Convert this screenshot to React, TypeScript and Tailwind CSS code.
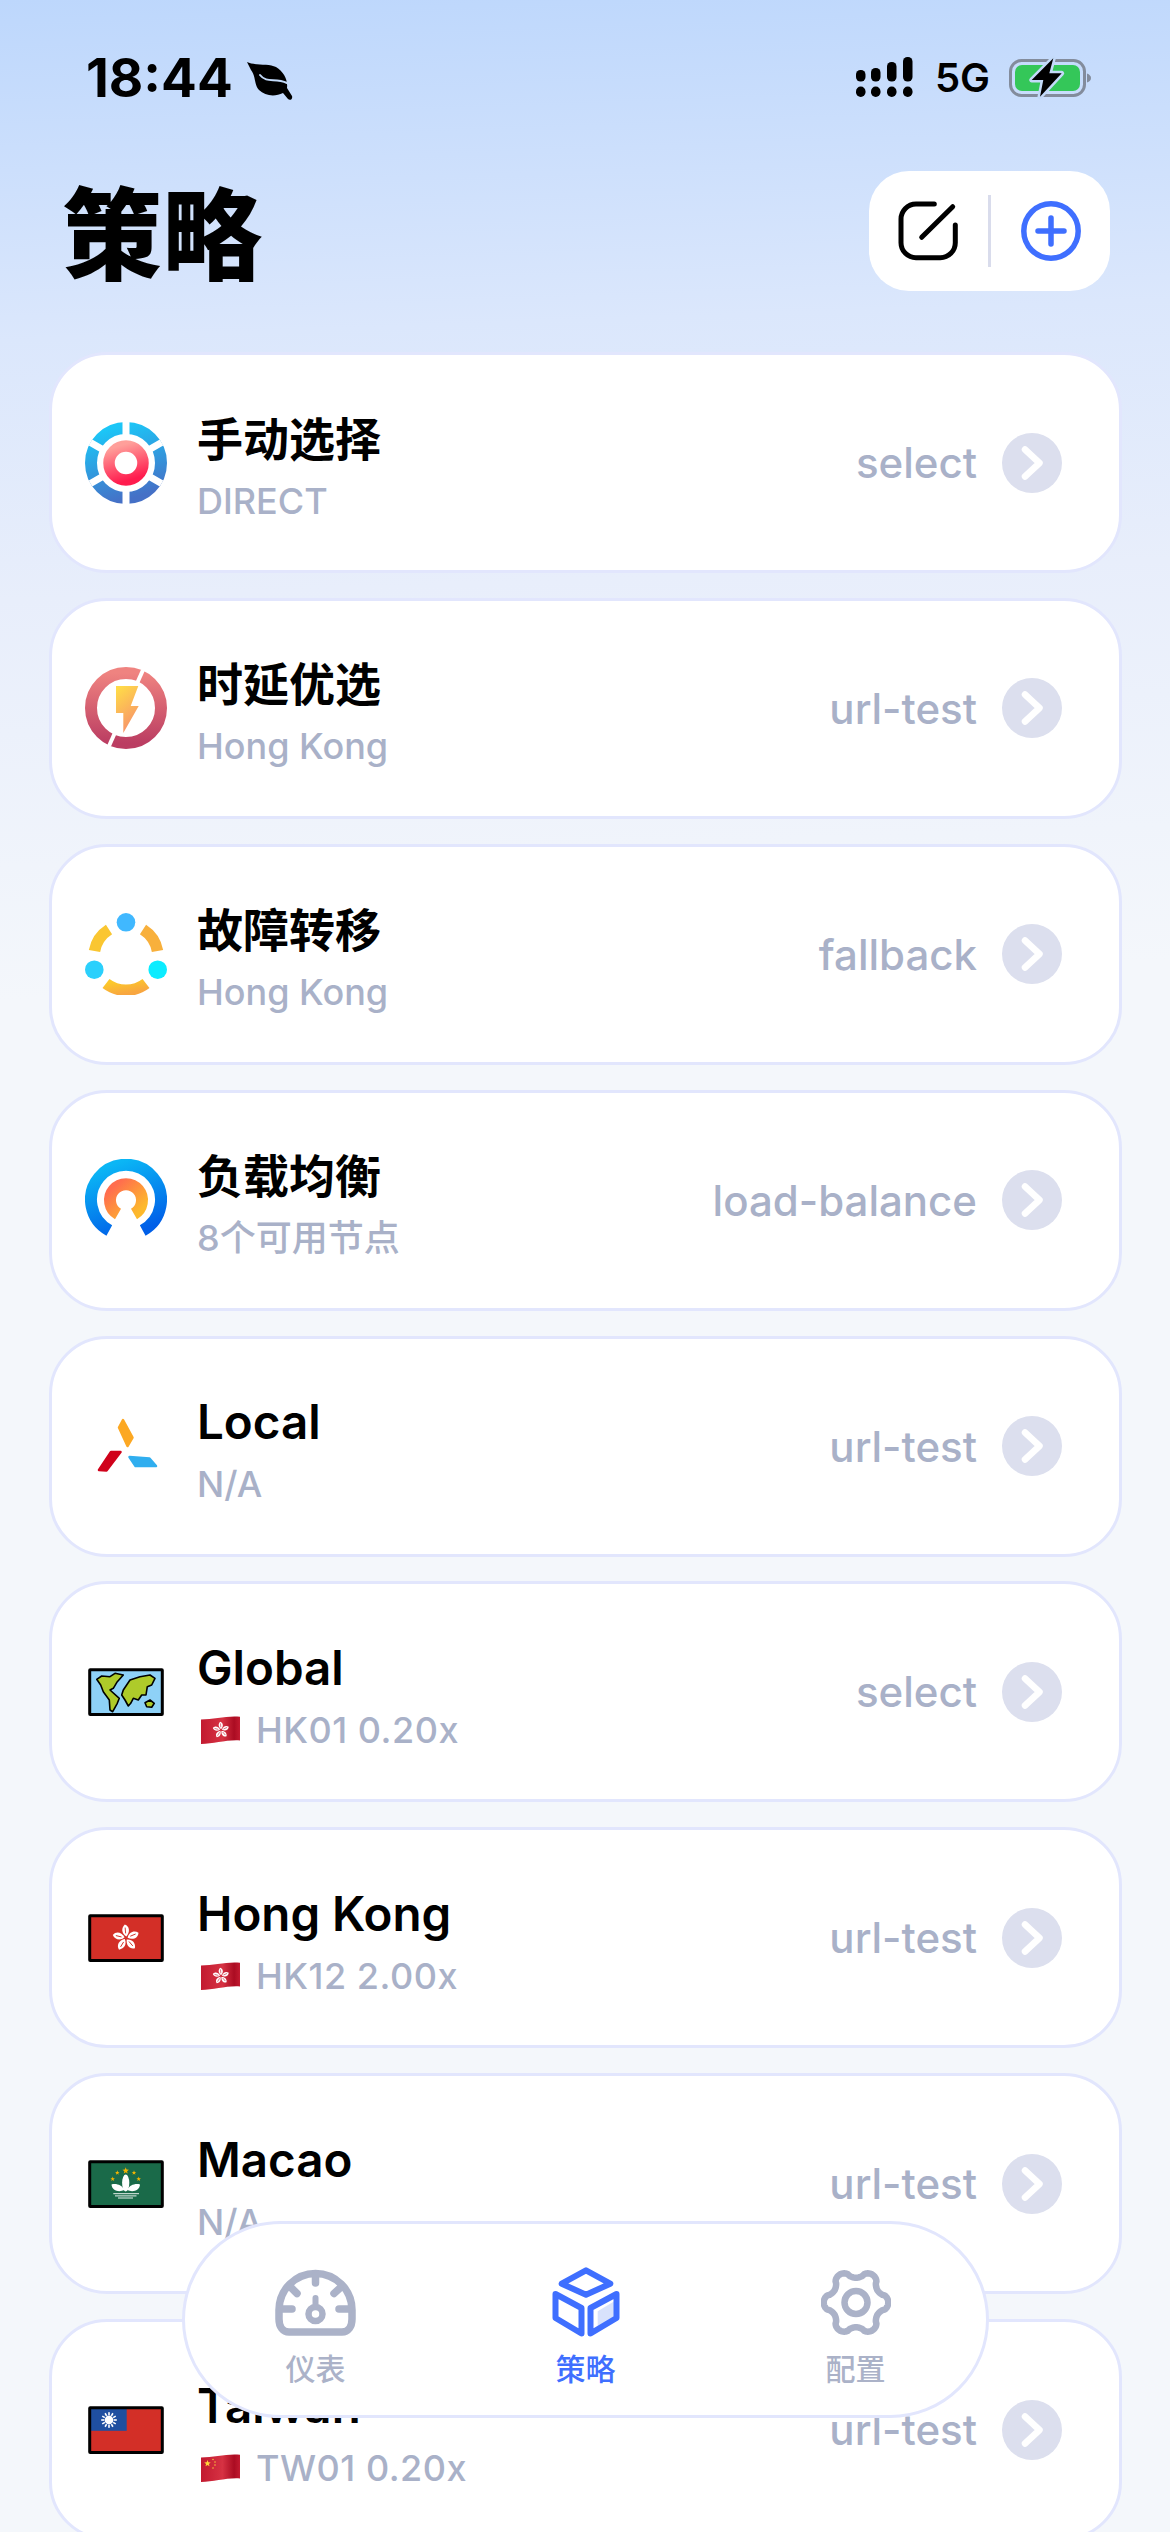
import type { ReactNode } from "react";

const SANS = "font-['Inter','Noto_Sans_CJK_SC',sans-serif]";

const gearPath = (() => {
  const pts: string[] = [];
  for (let i = 0; i < 180; i++) {
    const t = (i / 180) * Math.PI * 2;
    const c = Math.cos(6 * t);
    const r = 28.5 + 3.8 * Math.sign(c) * Math.pow(Math.abs(c), 0.65);
    pts.push(`${(35 + r * Math.cos(t)).toFixed(2)} ${(33.5 + r * Math.sin(t)).toFixed(2)}`);
  }
  return `M${pts.join("L")}Z`;
})();

const IconBox = ({ children }: { children: ReactNode }) => (
  <svg width="82" height="82" viewBox="0 0 82 82" className="shrink-0">
    {children}
  </svg>
);

const SelectIcon = () => (
  <IconBox>
    <defs>
      <linearGradient id="sel-a" x1="0.3" y1="0" x2="0.6" y2="1">
        <stop offset="0" stopColor="#1cc6f7" />
        <stop offset="1" stopColor="#4570c6" />
      </linearGradient>
      <linearGradient id="sel-b" x1="0.3" y1="0" x2="0.6" y2="1">
        <stop offset="0" stopColor="#ff9f9a" />
        <stop offset="1" stopColor="#ff1c4e" />
      </linearGradient>
    </defs>
    <circle cx="41" cy="41" r="35" fill="none" stroke="url(#sel-a)" strokeWidth="12" />
    <path d="M41 0V82M5.5 20.5L76.5 61.5M5.5 61.5L76.5 20.5" stroke="#fff" strokeWidth="7" />
    <circle cx="41" cy="41" r="17" fill="none" stroke="url(#sel-b)" strokeWidth="11.5" />
  </IconBox>
);

const UrlTestIcon = () => (
  <IconBox>
    <defs>
      <linearGradient id="url-a" x1="0" y1="0" x2="0" y2="1">
        <stop offset="0" stopColor="#ef8380" />
        <stop offset="1" stopColor="#bb3d62" />
      </linearGradient>
      <linearGradient id="url-b" x1="0.2" y1="0" x2="0.6" y2="1">
        <stop offset="0" stopColor="#ffdb48" />
        <stop offset="1" stopColor="#f78f6c" />
      </linearGradient>
    </defs>
    <circle cx="41" cy="41" r="35" fill="none" stroke="url(#url-a)" strokeWidth="12" />
    <path d="M58 3L24 79" stroke="#fff" strokeWidth="4" />
    <path d="M31 19H53.3L45.7 39H53.7L38.3 66V46H31Z" fill="url(#url-b)" />
  </IconBox>
);

const FallbackIcon = () => (
  <IconBox>
    <defs>
      <linearGradient id="fb-a" x1="0" y1="0" x2="1" y2="1">
        <stop offset="0" stopColor="#fcc82a" />
        <stop offset="1" stopColor="#f8a640" />
      </linearGradient>
    </defs>
    <circle cx="41" cy="9.3" r="9.3" fill="#40b8ff" />
    <circle cx="9.3" cy="56.7" r="9.3" fill="#2bd0fc" />
    <circle cx="72.7" cy="56.7" r="9.3" fill="#0cecff" />
    <path d="M9.5 38A32.4 32.4 0 0 1 24 16.5" fill="none" stroke="#fac631" strokeWidth="11.5" />
    <path d="M72.5 38A32.4 32.4 0 0 0 58 16.5" fill="none" stroke="#f8b03c" strokeWidth="11.5" />
    <path d="M21 70.5A33 33 0 0 0 61 70.5" fill="none" stroke="url(#fb-a)" strokeWidth="11.5" />
  </IconBox>
);

const BalanceIcon = () => (
  <IconBox>
    <defs>
      <linearGradient id="lb-a" x1="0.3" y1="0" x2="0.7" y2="1">
        <stop offset="0" stopColor="#0bb6f5" />
        <stop offset="1" stopColor="#005fe8" />
      </linearGradient>
      <linearGradient id="lb-b" x1="0.1" y1="0.1" x2="0.9" y2="0.9">
        <stop offset="0" stopColor="#ff6d4e" />
        <stop offset="1" stopColor="#fdb92c" />
      </linearGradient>
    </defs>
    <path d="M24.3 71.5A35 35 0 1 1 57.7 71.5" fill="none" stroke="url(#lb-a)" strokeWidth="12" />
    <path d="M33 55A16 16 0 1 1 49 55" fill="none" stroke="url(#lb-b)" strokeWidth="12" />
  </IconBox>
);

const LocalIcon = () => (
  <IconBox>
    <path d="M38 15L47.5 32.5L42.5 41L34 22.5Z" fill="#fca823" stroke="#fca823" strokeWidth="2.5" strokeLinejoin="round" />
    <path d="M26 47H35.5L21.5 65.5L14 65Z" fill="#d0021b" stroke="#d0021b" strokeWidth="2.5" strokeLinejoin="round" />
    <path d="M44.5 52L64.5 53.5L71 61H50.5Z" fill="#30aeef" stroke="#30aeef" strokeWidth="2.5" strokeLinejoin="round" />
  </IconBox>
);

const FlagFrame = () => (
  <rect x="4.7" y="18.8" width="72.6" height="44.6" fill="none" stroke="#000" strokeWidth="3" rx="0.5" />
);

const GlobalIcon = () => (
  <IconBox>
    <rect x="4.7" y="18.8" width="72.6" height="44.6" fill="#8ed1f7" />
    <g fill="#aecb2a" stroke="#000" strokeWidth="1.6" strokeLinejoin="round">
      <path d="M11.7 28.3L16.7 25L25 25.7L30 22.3L38.3 24L32.3 30.7L28.3 37.3L25 39L34.3 47.3L32.3 52.3L27.7 60.7L25 59L24.3 49L18.3 40.7L15.7 34Z" />
      <path d="M38.3 39L45 29L55 25.7L65 24L70 27.3L66.7 34L62.3 35.7L61 44L56.7 44L53.3 49L48.3 47.3L45.7 52.3L43.3 55L40 49L36.7 44Z" />
      <path d="M60 51.7L65 49L69.3 52.3L66.7 56.3L61.7 55.7Z" />
    </g>
    <FlagFrame />
  </IconBox>
);

const Bauhinia = ({ cx, cy, s = 1, vein = "#d32f27" }: { cx: number; cy: number; s?: number; vein?: string }) => (
  <g transform={`translate(${cx} ${cy}) scale(${s})`}>
    {[0, 72, 144, 216, 288].map((a) => (
      <g key={a} transform={`rotate(${a})`}>
        <path d="M0.3 -1.6C-4.6 -4.5 -5 -10 -1.2 -13.5C3.6 -11.8 4.4 -6 0.3 -1.6Z" fill="#fff" />
        <path d="M-0.4 -5L-0.8 -10" stroke={vein} strokeWidth="0.9" strokeLinecap="round" />
      </g>
    ))}
  </g>
);

const HongKongIcon = () => (
  <IconBox>
    <rect x="4.7" y="18.8" width="72.6" height="44.6" fill="#d32f27" />
    <Bauhinia cx={41} cy={41} />
    <FlagFrame />
  </IconBox>
);

const Star = ({ x, y, r, fill = "#f5b400" }: { x: number; y: number; r: number; fill?: string }) => {
  const pts = Array.from({ length: 10 }, (_, i) => {
    const a = -Math.PI / 2 + (i * Math.PI) / 5;
    const d = i % 2 === 0 ? r : r * 0.42;
    return `${(x + d * Math.cos(a)).toFixed(2)},${(y + d * Math.sin(a)).toFixed(2)}`;
  }).join(" ");
  return <polygon points={pts} fill={fill} />;
};

const MacaoIcon = () => (
  <IconBox>
    <rect x="4.7" y="18.8" width="72.6" height="44.6" fill="#1a6a49" />
    <Star x={40.7} y={27.7} r={3.4} />
    <Star x={32.3} y={29.7} r={2.4} />
    <Star x={49} y={29.7} r={2.4} />
    <Star x={27.7} y={36} r={2.4} />
    <Star x={53.7} y={36} r={2.4} />
    <ellipse cx="40.7" cy="40" rx="3.6" ry="8.5" fill="#fff" />
    <path d="M26.5 41.5C31 40 37 42 39.5 47C34 49.5 27 48 26.5 41.5Z" fill="#fff" />
    <path d="M55 41.5C50.5 40 44.5 42 42 47C47.5 49.5 54.5 48 55 41.5Z" fill="#fff" />
    <path d="M28.3 50.7H54M30 52.9H51.5M33 55H48" stroke="#fff" strokeWidth="0.9" />
    <FlagFrame />
  </IconBox>
);

const TaiwanIcon = () => (
  <IconBox>
    <rect x="4.7" y="18.8" width="72.6" height="44.6" fill="#d32f27" />
    <rect x="4.7" y="18.8" width="37" height="23" fill="#1f4fa0" />
    <g transform="translate(24 31)">
      {Array.from({ length: 12 }, (_, i) => (
        <rect key={i} x="-0.8" y="-7.8" width="1.6" height="3" fill="#fff" transform={`rotate(${i * 30})`} />
      ))}
      <circle r="4.4" fill="#fff" />
    </g>
    <FlagFrame />
  </IconBox>
);

const EmojiFlag = ({ kind }: { kind: "hk" | "cn" }) => {
  const id = `wave-${kind}`;
  return (
    <svg width="39" height="28" viewBox="0 0 39 28" className="ml-[4px] mr-[16px] shrink-0">
      <defs>
        <clipPath id={`${id}-clip`}>
          <path d="M0 3.5C13 3.5 26 -0.5 39 0.8V24.5C26 23.5 13 28 0 28Z" />
        </clipPath>
        <linearGradient id={`${id}-shade`} x1="0" y1="0" x2="1" y2="0">
          <stop offset="0" stopColor="#c21a30" />
          <stop offset="0.55" stopColor="#d63243" />
          <stop offset="0.85" stopColor="#ab0c22" />
          <stop offset="1" stopColor="#c21a30" />
        </linearGradient>
      </defs>
      <g clipPath={`url(#${id}-clip)`}>
        <rect width="39" height="28" fill={`url(#${id}-shade)`} />
      </g>
      {kind === "hk" ? (
        <Bauhinia cx={20} cy={14} s={0.62} vein="#c21a30" />
      ) : (
        <g>
          <Star x={6.5} y={9.5} r={3.4} fill="#ffd83a" />
          <circle cx="12" cy="5.5" r="0.7" fill="#ffd83a" />
          <circle cx="14" cy="8" r="0.7" fill="#ffd83a" />
          <circle cx="14" cy="11" r="0.7" fill="#ffd83a" />
          <circle cx="12" cy="14" r="0.7" fill="#ffd83a" />
        </g>
      )}
    </svg>
  );
};

const Chevron = () => (
  <svg width="60" height="60" viewBox="0 0 60 60" className="shrink-0">
    <circle cx="30" cy="30" r="30" fill="#dcdfee" />
    <path d="M23 16.5L37.5 30L23 43.5" fill="none" stroke="#fff" strokeWidth="6.5" strokeLinecap="round" strokeLinejoin="round" />
  </svg>
);

type Group = {
  name: string;
  cjk?: boolean;
  sub: string;
  flag?: "hk" | "cn";
  type: string;
  icon: ReactNode;
};

const groups: Group[] = [
  { name: "手动选择", cjk: true, sub: "DIRECT", type: "select", icon: <SelectIcon /> },
  { name: "时延优选", cjk: true, sub: "Hong Kong", type: "url-test", icon: <UrlTestIcon /> },
  { name: "故障转移", cjk: true, sub: "Hong Kong", type: "fallback", icon: <FallbackIcon /> },
  { name: "负载均衡", cjk: true, sub: "8个可用节点", type: "load-balance", icon: <BalanceIcon /> },
  { name: "Local", sub: "N/A", type: "url-test", icon: <LocalIcon /> },
  { name: "Global", sub: "HK01 0.20x", flag: "hk", type: "select", icon: <GlobalIcon /> },
  { name: "Hong Kong", sub: "HK12 2.00x", flag: "hk", type: "url-test", icon: <HongKongIcon /> },
  { name: "Macao", sub: "N/A", type: "url-test", icon: <MacaoIcon /> },
  { name: "Taiwan", sub: "TW01 0.20x", flag: "cn", type: "url-test", icon: <TaiwanIcon /> },
];

const GroupCard = ({ group }: { group: Group }) => (
  <div className="flex h-[221px] shrink-0 items-center rounded-[58px] border-[3px] border-[#e2e6fd] bg-white pl-[33px] pr-[57px]">
    {group.icon}
    <div className="ml-[30px] flex flex-1 flex-col pt-[10px]">
      <div className={`leading-[52px] font-semibold text-black ${group.cjk ? "text-[46px]" : "text-[47.5px]"}`}>
        {group.name}
      </div>
      <div
        className={`mt-[14px] flex items-center text-[36px] leading-[44px] font-medium text-[#a9b1c8] ${group.flag ? "tracking-[0.5px]" : ""}`}
      >
        {group.flag && <EmojiFlag kind={group.flag} />}
        <span>{group.sub}</span>
      </div>
    </div>
    <span className="mr-[25px] text-[42px] font-medium text-[#a9b1c8]">{group.type}</span>
    <Chevron />
  </div>
);

const Signal = () => (
  <svg width="60" height="45" viewBox="0 0 60 45" className="shrink-0">
    <g fill="#000">
      <rect x="1" y="15" width="9.5" height="11.5" rx="4.5" />
      <rect x="16" y="13" width="9.5" height="13.5" rx="4.5" />
      <rect x="32" y="7" width="9.5" height="19.5" rx="4.5" />
      <rect x="48" y="2" width="9.5" height="24.5" rx="4.5" />
      <rect x="1" y="31.5" width="9.5" height="10.5" rx="4.7" />
      <rect x="16" y="31.5" width="9.5" height="10.5" rx="4.7" />
      <rect x="32" y="31.5" width="9.5" height="10.5" rx="4.7" />
      <rect x="48" y="31.5" width="9.5" height="10.5" rx="4.7" />
    </g>
  </svg>
);

const Battery = () => (
  <svg width="90" height="45" viewBox="0 0 90 45" className="shrink-0">
    <rect x="5.5" y="5.5" width="74" height="35" rx="11" fill="none" stroke="#838c9c" strokeWidth="3" />
    <rect x="10" y="10" width="65" height="26" rx="7" fill="#34c759" />
    <path d="M82 18.5C84.5 19.5 86 21 86 23C86 25 84.5 26.5 82 27.5Z" fill="#838c9c" />
    <path
      d="M48.3 3.3L26.7 25H38.3L35 41.7L56.7 18.3H44.3Z"
      fill="#000"
      stroke="#c3daf9"
      strokeWidth="5"
      strokeLinejoin="round"
      paintOrder="stroke"
    />
  </svg>
);

const Leaf = () => (
  <svg width="46" height="39" viewBox="0 0 46 39" className="shrink-0">
    <path
      d="M0 0C8 4 22 1 29 5C37 10 41 18 40 26L45 34C46 37 43 39 41 37L36 31C28 35 18 34 12 28C7 23 9 14 4 8Z"
      fill="#000"
    />
    <path d="M13 13C20 22 28 15 40 21" fill="none" stroke="#c3daf9" strokeWidth="2" strokeLinecap="round" />
  </svg>
);

const EditIcon = () => (
  <svg width="60" height="60" viewBox="0 0 60 60" className="shrink-0">
    <g fill="none" stroke="#000" strokeWidth="5" strokeLinecap="round">
      <path d="M36.3 3H18A15 15 0 0 0 3 18V41.7A15 15 0 0 0 18 56.7H42.3A15 15 0 0 0 57.3 41.7V24" />
      <path d="M23.7 36.3L54.7 5.7" />
    </g>
  </svg>
);

const PlusIcon = () => (
  <svg width="60" height="60" viewBox="0 0 60 60" className="shrink-0">
    <g fill="none" stroke="#3f6fff" strokeWidth="5.5" strokeLinecap="round">
      <circle cx="30" cy="30" r="27.2" />
      <path d="M30 17V43M17 30H43" />
    </g>
  </svg>
);

const GaugeIcon = () => (
  <svg width="81" height="67" viewBox="0 0 81 67">
    <g fill="none" stroke="#abb2c8" strokeWidth="7.5" strokeLinecap="round">
      <path d="M14 63H67C73 63 77 58 77 50V41A36.5 36.5 0 0 0 4 41V50C4 58 8 63 14 63Z" />
      <path d="M40.5 7V14M16.5 19L22 24.5M65 19L59 24.5M7 40H17M64 40H74" />
      <circle cx="40.5" cy="45" r="7" strokeWidth="6.5" />
      <path d="M40.5 29V38" strokeWidth="6" />
    </g>
  </svg>
);

const CubeIcon = () => (
  <svg width="68" height="71" viewBox="0 0 68 71">
    <path d="M45.7 44.3L62.3 34.3V51L45.7 60Z" fill="#d8e2fc" />
    <g fill="none" stroke="#3f6fff" strokeWidth="6" strokeLinejoin="round">
      <path d="M34 3.3L58.3 16.7L34 27.7L9.7 16.7Z" />
      <path d="M3.5 27L29.5 41V66.5L3.5 51Z" />
      <path d="M64.5 27L38.5 41V66.5L64.5 51Z" />
    </g>
  </svg>
);

const GearIcon = () => (
  <svg width="70" height="67" viewBox="0 0 70 67">
    <g fill="none" stroke="#abb2c8" strokeWidth="6.5" strokeLinejoin="round">
      <path d={gearPath} />
      <circle cx="35" cy="33.5" r="11.5" />
    </g>
  </svg>
);

const tabs = [
  { label: "仪表", icon: <GaugeIcon />, active: false },
  { label: "策略", icon: <CubeIcon />, active: true },
  { label: "配置", icon: <GearIcon />, active: false },
];

export default function App() {
  return (
    <div
      className={`${SANS} relative h-[2532px] w-full overflow-hidden bg-[linear-gradient(178deg,#bdd7fc_0%,#dbe7fc_340px,#e8eefb_600px,#f4f7fb_1000px)]`}
    >
      <div className="flex h-[171px] items-start justify-between pl-[86px] pr-[75px] pt-[53px]">
        <div className="flex items-center">
          <span className="text-[53px] leading-[50px] font-bold text-black">18:44</span>
          <span className="ml-[14px] mt-[7px]">
            <Leaf />
          </span>
        </div>
        <div className="flex items-center pt-[2px]">
          <Signal />
          <span className="ml-[20px] text-[40px] leading-[45px] font-semibold text-black">5G</span>
          <span className="ml-[15px]">
            <Battery />
          </span>
        </div>
      </div>

      <div className="flex h-[120px] items-start justify-between pl-[62px] pr-[60px]">
        <h1 className="mt-[5px] text-[100px] leading-[120px] font-black text-black">策略</h1>
        <div className="flex h-[120px] items-center gap-[30px] rounded-[40px] bg-white px-[29px]">
          <EditIcon />
          <div className="h-[72px] w-[3px] bg-[#d9dcec]" />
          <PlusIcon />
        </div>
      </div>

      <div className="mt-[61px] flex flex-col gap-[24.9px] pl-[49px] pr-[48px]">
        {groups.map((group) => (
          <GroupCard key={group.name} group={group} />
        ))}
      </div>

      {/* floating tab bar */}
      <div className="absolute left-[182px] top-[2221px] flex h-[197px] w-[807px] justify-center rounded-full border-[3px] border-[#e2e6fd] bg-white">
        <div className="grid grid-cols-[270px_270px_270px] justify-center pt-[43px]">
          {tabs.map((tab) => (
            <div key={tab.label} className="flex flex-col items-center">
              <div className="flex h-[71px] items-center">{tab.icon}</div>
              <span
                className={`mt-[13px] text-[30px] leading-[36px] font-medium ${tab.active ? "text-[#3f6fff]" : "text-[#abb2c8]"}`}
              >
                {tab.label}
              </span>
            </div>
          ))}
        </div>
      </div>
    </div>
  );
}
